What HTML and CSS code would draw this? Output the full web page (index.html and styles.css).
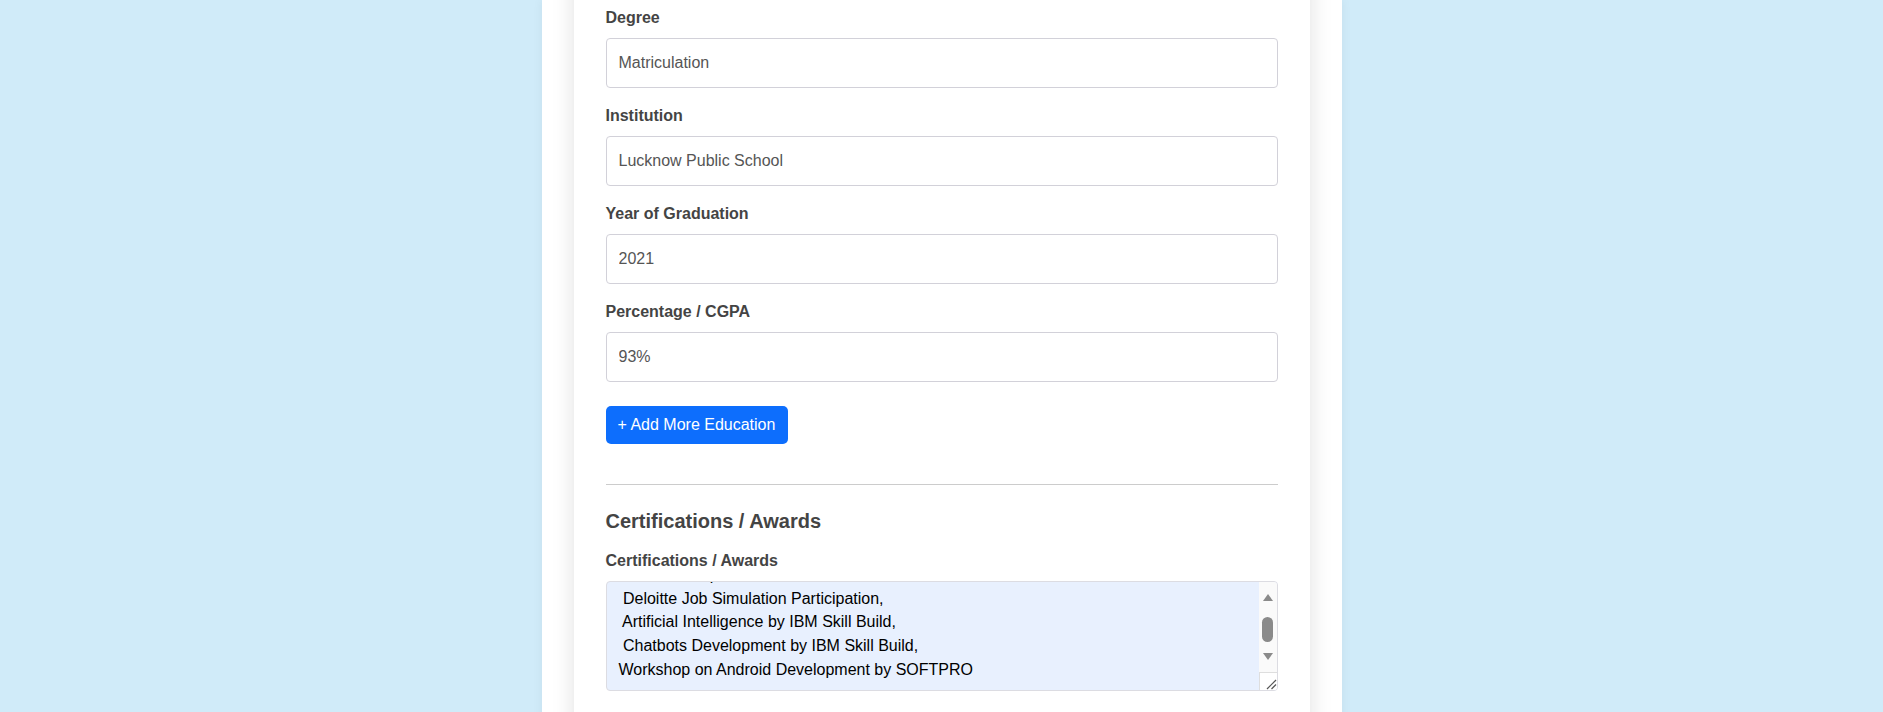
FILE: index.html
```html
<!DOCTYPE html>
<html lang="en">
<head>
<meta charset="utf-8">
<title>Resume Builder - Education</title>
<link rel="stylesheet" href="styles.css">
</head>
<body>
<div class="page">
  <main class="sheet">
    <section class="card">
      <div class="field">
        <label class="field-label">Degree</label>
        <input class="control" type="text" value="Matriculation">
      </div>
      <div class="field">
        <label class="field-label">Institution</label>
        <input class="control" type="text" value="Lucknow Public School">
      </div>
      <div class="field">
        <label class="field-label">Year of Graduation</label>
        <input class="control" type="text" value="2021">
      </div>
      <div class="field">
        <label class="field-label">Percentage / CGPA</label>
        <input class="control" type="text" value="93%">
      </div>
      <button class="btn-add" type="button">+ Add More Education</button>
      <hr class="divider">
      <h3 class="section-title">Certifications / Awards</h3>
      <div class="field">
        <label class="field-label">Certifications / Awards</label>
        <div class="cert-box">
          <div class="cert-text">
            <div class="cert-lines">
              <div class="line"> Web Development Course,</div>
              <div class="line"> Deloitte Job Simulation Participation,</div>
              <div class="line"> Artificial Intelligence by IBM Skill Build,</div>
              <div class="line"> Chatbots Development by IBM Skill Build,</div>
              <div class="line">Workshop on Android Development by SOFTPRO</div>
            </div>
          </div>
          <div class="scrollbar">
            <span class="arrow arrow-up"></span>
            <span class="thumb"></span>
            <span class="arrow arrow-down"></span>
            <span class="track-rest"></span>
            <span class="resizer">
              <svg width="17" height="17" viewBox="0 0 17 17">
                <path d="M7 16 L16 7" stroke="#555" stroke-width="1.2" fill="none"/>
                <path d="M11.5 16 L16 11.5" stroke="#555" stroke-width="1.2" fill="none"/>
              </svg>
            </span>
          </div>
        </div>
      </div>
    </section>
  </main>
</div>
</body>
</html>
```

FILE: styles.css
```css
* {
  box-sizing: border-box;
}

html, body {
  margin: 0;
  padding: 0;
  height: 100%;
  overflow: hidden;
}

body {
  background: #d0ebf9;
  font-family: "Liberation Sans", Arial, sans-serif;
  font-size: 16px;
  color: #444;
}

.page {
  display: flex;
  justify-content: center;
  min-height: 100%;
}

.sheet {
  width: 800px;
  background: #fff;
  padding: 0 32px;
  box-shadow: 0 0 10px rgba(0, 0, 0, 0.06);
  min-height: 100%;
}

.card {
  background: #fff;
  margin-top: -40px;
  padding: 48px 32px 40px;
  box-shadow: 0 0 22px rgba(0, 0, 0, 0.12);
  min-height: 900px;
}

.field {
  margin-bottom: 18px;
}

.field-label {
  display: block;
  font-weight: bold;
  font-size: 16px;
  line-height: 19px;
  color: #444;
  margin-bottom: 11px;
}

.control {
  display: block;
  width: 100%;
  height: 50px;
  padding: 0 12px;
  font-family: "Liberation Sans", Arial, sans-serif;
  font-size: 16px;
  color: #555;
  background: #fff;
  border: 1px solid #d2d1d9;
  border-radius: 4px;
  outline: none;
}

.btn-add {
  display: block;
  margin-top: 24px;
  height: 38px;
  padding: 0 13px 0 12px;
  font-family: "Liberation Sans", Arial, sans-serif;
  font-size: 16px;
  color: #fff;
  background: #0d6efd;
  border: none;
  border-radius: 5px;
}

.divider {
  border: none;
  border-top: 1px solid #ccc;
  margin: 40px 0 25px;
}

.section-title {
  margin: 0 0 18px;
  font-size: 20px;
  line-height: 23px;
  font-weight: bold;
  color: #444;
}

.cert-box {
  display: flex;
  height: 110px;
  border: 1px solid #dcdce2;
  border-radius: 4px;
  background: #e8f0fe;
  overflow: hidden;
}

.cert-text {
  flex: 1;
  overflow: hidden;
  padding: 0 12px;
}

.cert-lines {
  margin-top: -19px;
  color: #000;
  font-size: 16px;
  line-height: 23.7px;
}

.line {
  white-space: pre;
}

.scrollbar {
  width: 18px;
  flex: none;
  background: #fafafa;
  display: flex;
  flex-direction: column;
  align-items: center;
  padding-top: 12px;
}

.arrow {
  width: 0;
  height: 0;
  border-left: 5.5px solid transparent;
  border-right: 5.5px solid transparent;
}

.arrow-up {
  border-bottom: 7px solid #8a8a8a;
}

.arrow-down {
  border-top: 7px solid #8a8a8a;
  margin-top: 11px;
}

.thumb {
  width: 11px;
  height: 25px;
  border-radius: 6px;
  background: #8a8a8a;
  margin-top: 16px;
}

.track-rest {
  flex: 1;
}

.resizer {
  align-self: stretch;
  height: 18px;
  border-top: 1px solid #dedede;
  border-left: 1px solid #dedede;
  background: #fff;
  display: flex;
}
```
